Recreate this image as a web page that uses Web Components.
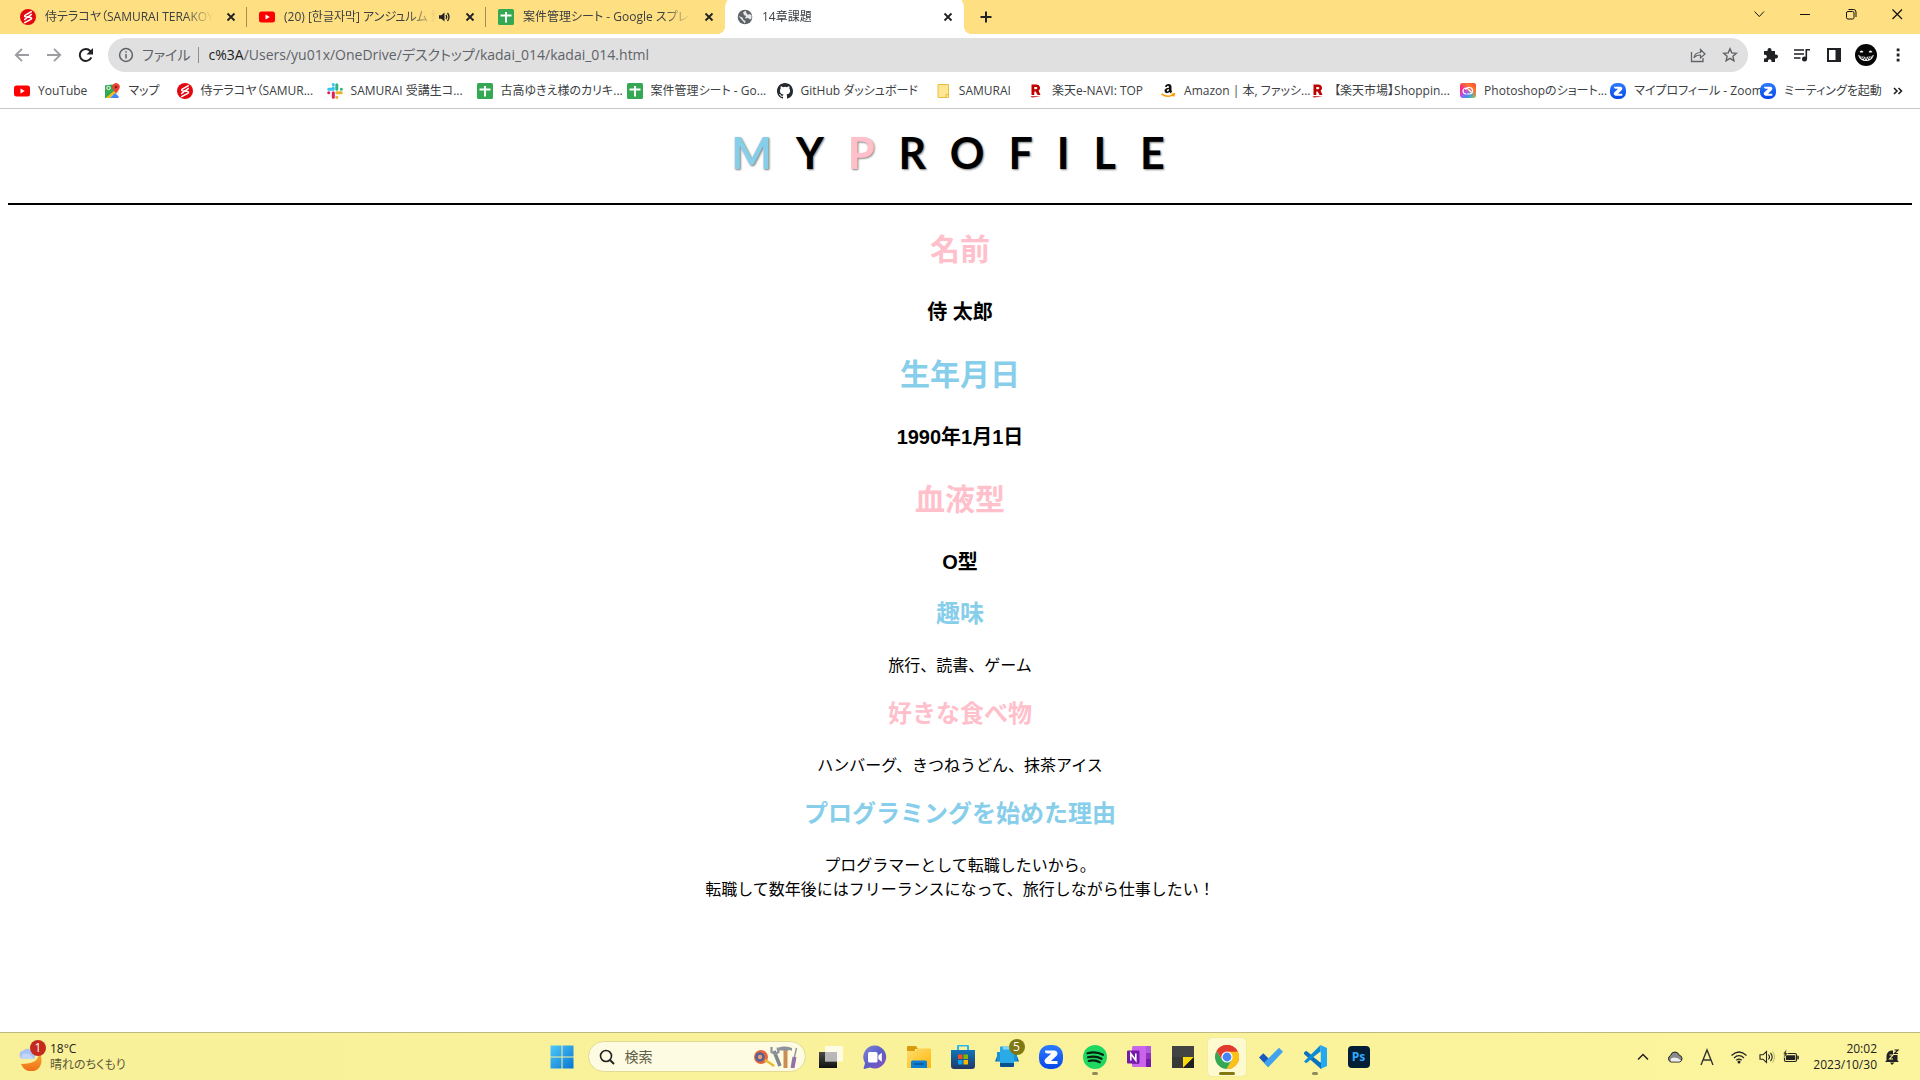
<!DOCTYPE html>
<html lang="ja">
<head>
<meta charset="utf-8">
<title>14章課題</title>
<style>
  html, body { margin: 0; height: 100%; }
  body { background: #fff; overflow: hidden; font-family: "Open Sans", "Noto Sans CJK JP", "Noto Sans CJK KR", sans-serif; }
</style>
</head>
<body>
<desktop-screen></desktop-screen>
<script>
const sheet = '<rect width="16" height="16" rx="1.5" fill="#34a853"/><path d="M2.5 6.5h11M8 3v10.5" stroke="#fff" stroke-width="2" fill="none"/>';
const zoomIcon = '<linearGradient id="z" x1="0" y1="0" x2="0" y2="1"><stop stop-color="#2d7cff"/><stop offset="1" stop-color="#0546e8"/></linearGradient><rect width="24" height="24" rx="10" fill="url(#z)"/><path d="M6 5.500h9.500a3 3 0 0 1 2.300 4.900L12 16h6.500v3H8.500a3 3 0 0 1-2.300-4.900L12.300 8.500H8.500A2.500 2.500 0 0 1 6 6z" fill="#fff"/>';
const samurai = '<circle cx="8" cy="8" r="8" fill="#e3070f"/><path d="M11.800 2.300 5.300 6.200q-1.500 1 .2 1.600l5 .8q2 .5.3 1.700l-6.600 3.600M4.300 10.800l4-3.300M11.800 5.200l-4 3" stroke="#fff" stroke-width="1.500" fill="none"/>';
const youtube = '<rect y="2.500" width="16" height="11" rx="2.500" fill="#f00"/><path d="M6.500 5.500v5L10.800 8z" fill="#fff"/>';
const rakuten = '<path d="M3.500 1.500h5.300a3.400 3.400 0 0 1 1.800 6.200L12.500 12H9.600L7.600 8.400H6.300V12H3.500zM6.300 3.900V6.200H8.200a1.150 1.150 0 0 0 0-2.300z" fill="#bf0000"/><path d="M2.500 13.200h10.500L4 14.500z" fill="#bf0000"/>';
const ICONS = {
  samurai: [16, samurai], youtube: [16, youtube], sheet: [16, sheet], rakuten: [16, rakuten], zoom: [24, zoomIcon],
  globe: [16, '<circle cx="8" cy="8" r="7.300" fill="#5f6368"/><path d="M8.500 1.500 6 3.500 7 6l2 1-1 2.500L11 9l2 1.500 1.500-1L14.500 6 12 5l-1 1-1.500-2zM1.500 7l4 1.500 1 2.500 2 1-.5 2.500" fill="#ffffff" opacity=".85"/>'],
  close: [16, '<path d="m4.500 4.500 7 7m0-7-7 7" stroke="#202124" stroke-width="1.800" fill="none"/>'],
  sound: [16, '<path d="M3 6.300h2.300L8.500 3.500v9L5.300 9.700H3z" fill="#202124"/><path d="M10 6q1.500 2 0 4M11.500 4q3 4 0 8" stroke="#202124" stroke-width="1.300" fill="none"/>'],
  plus: [16, '<path d="M8 2.500v11M2.500 8h11" stroke="#202124" stroke-width="2"/>'],
  chev: [16, '<path d="m3.500 5.500 4.800 5 4.700-5" stroke="#111" fill="none"/>'],
  min: [16, '<path d="M3 8.500h10" stroke="#111"/>'],
  restore: [16, '<rect x="3.500" y="5.500" width="7.500" height="7.500" rx="1.500" stroke="#111" fill="none"/><path d="M5.500 3.500H10.500a2.500 2.500 0 0 1 2.500 2.500v5" stroke="#111" fill="none"/>'],
  wclose: [16, '<path d="m3.500 3.500 9.500 9.500m0-9.500L3.500 13" stroke="#111" stroke-width="1.200"/>'],
  back: [16, '<path d="M15 8H2M8 1.800 1.800 8 8 14.200" stroke="#9b9da0" stroke-width="1.900" fill="none"/>'],
  forward: [16, '<path d="M1 8h13M8 1.800 14.200 8 8 14.200" stroke="#9b9da0" stroke-width="1.900" fill="none"/>'],
  reload: [16, '<path d="M13.300 10.300A6 6 0 1 1 12.300 4L13.500 5.500" stroke="#202124" stroke-width="2" fill="none"/><path d="M15 1v6.500H8.500z" fill="#202124"/>'],
  info: [16, '<circle cx="8" cy="8" r="6.400" stroke="#5f6368" stroke-width="1.500" fill="none"/><path d="M8 7v4.500M8 4.300v1.500" stroke="#5f6368" stroke-width="1.500"/>'],
  share: [16, '<path d="M1.500 5v9.500h11.500V11" stroke="#5f6368" stroke-width="1.300" fill="none"/><path d="M4 11q.5-5.500 6.500-5.500V2.500L15 7l-4.500 4V8Q6 8 4 11z" stroke="#5f6368" stroke-width="1.200" fill="none"/>'],
  star: [16, '<path d="m8 1.800 1.800 4.100 4.500.4-3.400 3 1 4.400L8 11.400l-3.900 2.300 1-4.400-3.400-3 4.500-.4z" stroke="#5f6368" stroke-width="1.400" fill="none"/>'],
  puzzle: [16, '<path d="M2 4h3.500V3a2 2 0 0 1 4 0v1H13v3.500h1a2 2 0 0 1 0 4h-1V15H9.500v-1a1.800 1.800 0 0 0-3.600 0v1H2v-3.500h1A1.900 1.900 0 0 0 3 7.700H2z" fill="#202124"/>'],
  media: [16, '<path d="M0 3h10M0 7h10M0 11h6.500" stroke="#202124" stroke-width="1.700"/><circle cx="10.500" cy="12" r="2.500" fill="#202124"/><path d="M12.300 12V2.800H16" stroke="#202124" stroke-width="1.600" fill="none"/>'],
  panel: [16, '<path d="M1 1h14v14H1z" fill="#202124"/><path d="M3 3h6.500v10H3z" fill="#fff"/>'],
  avatar: [22, '<circle cx="11" cy="11" r="11" fill="#050505"/><path d="M4.500 8q2-3 4 0-2 1-4 0M13.500 8q2-3 4 0-2 1-4 0M3 11q8 4 16 0-2 6-8 6t-8-6z" fill="#fff"/><path d="m4.500 13 2-.5.5 2.500 1.500-2 1 3 1.500-3 1.500 3 1-3 1.500 2 .7-2.500 2 .5" stroke="#050505" stroke-width=".7" fill="none"/>'],
  dots: [16, '<path d="M6.700 1.500h2.800v2.800H6.700zM6.700 6.600h2.800v2.800H6.700zM6.700 11.700h2.800v2.800H6.700z" fill="#202124"/>'],
  more: [16, '<path d="m4 5 3 3-3 3M8.500 5l3 3-3 3" stroke="#202124" stroke-width="1.600" fill="none"/>'],
  maps: [16, '<rect x="1" y="1.500" width="13.500" height="13.500" rx="1.500" fill="#e6e6e6"/><path d="M1 2.500 8.500 1.500 13 6 2 15H1z" fill="#34a853"/><path d="m2 15 11-9.500 1.500 1.500-9 8z" fill="#fbbc04"/><path d="m6 15 5-5 3.500 3.500V15z" fill="#4285f4"/><path d="M12 0a3.800 3.800 0 0 1 3.500 5.300Q15 7 12 10.500 9 7 8.500 5.300A3.800 3.800 0 0 1 12 0z" fill="#ea4335"/><circle cx="12" cy="4" r="1.300" fill="#8b1a10"/><circle cx="4.500" cy="5" r="1.700" stroke="#fff" fill="none"/>'],
  slack: [16, '<g stroke-width="3" stroke-linecap="round"><path d="M1.700 6.300H5M6.300 1.600v.1M6.300 5v1.300" stroke="#36c5f0"/><path d="M9.800 1.700v4.500M14.300 6.300h.1" stroke="#2eb67d"/><path d="M9.800 9.800h4.500M9.800 14.300v.1" stroke="#ecb22e"/><path d="M6.300 9.800v4.500M1.700 9.800h.1" stroke="#e01e5a"/></g>'],
  github: [16, '<path fill="#24292f" d="M8 0C3.580 0 0 3.580 0 8c0 3.540 2.290 6.530 5.470 7.590.4.070.55-.17.55-.38 0-.19-.01-.82-.01-1.490-2.010.37-2.530-.49-2.690-.94-.09-.23-.48-.94-.82-1.130-.28-.15-.68-.52-.01-.53.63-.01 1.080.58 1.230.82.72 1.210 1.870.87 2.330.66.070-.52.28-.87.51-1.070-1.780-.2-3.640-.89-3.640-3.950 0-.87.31-1.590.82-2.150-.08-.2-.36-1.020.08-2.120 0 0 .67-.21 2.200.82a7.600 7.600 0 0 1 4 0c1.530-1.040 2.200-.82 2.200-.82.44 1.100.16 1.920.08 2.120.51.56.82 1.270.82 2.150 0 3.070-1.870 3.750-3.650 3.950.29.25.54.73.54 1.480 0 1.070-.01 1.930-.01 2.200 0 .21.15.46.55.38A8 8 0 0 0 16 8c0-4.420-3.580-8-8-8z"/>'],
  folder: [16, '<path d="M3 1.500h10.500v13H3z" fill="#ffe693" stroke="#e8bf42"/><path d="M11 14.500v-3h2.500" stroke="#e8bf42" fill="none"/>'],
  amazon: [16, '<path d="M5 3.800Q5.500 1 8.500 1q3 0 3 3v3q0 1 .7 1.800L10.500 10.300q-.8-.6-1.100-1.200-1 1.100-2.500 1.100Q4.500 10 4.500 7.700 4.500 5 9 4.700 9.200 2.800 8 2.800 7 2.900 6.900 4zM9 6.100Q6.800 6.200 6.800 7.500q0 1 .9 1Q9 8.400 9 6.100" fill="#111"/><path d="M1.500 10.800q6 4.500 12 .8M11.500 11.300l2.800-.3-.8 2.500" stroke="#f90" stroke-width="1.600" fill="none"/>'],
  adobe: [16, '<linearGradient id="r" x1="0" y1="0" x2="1" y2="1"><stop stop-color="#f33"/><stop offset=".3" stop-color="#f0309c"/><stop offset=".5" stop-color="#a55cf0"/><stop offset=".7" stop-color="#2f9bf0"/><stop offset="1" stop-color="#8fe040"/></linearGradient><linearGradient id="o" x1="1" y1="0" x2="0" y2="1"><stop stop-color="#ff4020"/><stop offset=".3" stop-color="#ff7a30"/><stop offset=".6" stop-color="#ff7a30" stop-opacity="0"/></linearGradient><rect width="16" height="15" rx="3" fill="url(#r)"/><rect width="16" height="15" rx="3" fill="url(#o)"/><path d="M6 11a3 3 0 1 1 0-6q1.500 0 3 2l2 2M5.500 6.800Q7 3.800 9.500 4.500a3.300 3.300 0 0 1 .5 6.500H6.500" stroke="#fff" stroke-width="1.200" fill="none"/>'],
  weather: [28, '<linearGradient id="m" x1="0" y1="0" x2="0" y2="1"><stop stop-color="#f9b53c"/><stop offset="1" stop-color="#ee6e14"/></linearGradient><path d="M20 7q4 14-17 14 3 7 10 7.500Q22 28 23.500 19 23.500 10 20 7z" fill="url(#m)"/><path d="M5 16a4.300 4.300 0 0 1 .5-8.500A5 5 0 0 1 14 9q5 1.500 2 7z" fill="#a9c4f4"/><path d="M5 16a3 3 0 0 1 0-5q6-2 11 5z" fill="#c4d5f8"/>'],
  windows: [24, '<linearGradient id="w" x1="0" y1="0" x2="1" y2="1"><stop stop-color="#4fc9f8"/><stop offset="1" stop-color="#0676d2"/></linearGradient><path d="M.5.500h11v11H.5zM12.500.500h11v11h-11zM.5 12.500h11v11H.5zM12.500 12.500h11v11h-11z" fill="url(#w)"/>'],
  search: [16, '<circle cx="7" cy="7" r="5.500" stroke="#222" stroke-width="1.600" fill="none"/><path d="m11 11 4 4" stroke="#222" stroke-width="2"/>'],
  taskview: [24, '<linearGradient id="k" x1="0" y1="0" x2="0" y2="1"><stop stop-color="#4a4a4a"/><stop offset="1" stop-color="#111"/></linearGradient><path d="M0 7h18v16H0z" fill="url(#k)"/><path d="M6 1h18v15.500H6z" fill="#fff" opacity=".75"/><path d="M6 7h12v9.500H6z" fill="#aaa" opacity=".6"/>'],
  chat: [24, '<linearGradient id="c" x1="0" y1="0" x2="1" y2="1"><stop stop-color="#8187dc"/><stop offset=".5" stop-color="#5b5fc7"/><stop offset="1" stop-color="#8b4fc0"/></linearGradient><path d="M12 .5A11.500 11.500 0 1 1 7 22.500L1.200 24q-.8 0-.5-1L2 18A11.500 11.500 0 0 1 12 .5z" fill="url(#c)"/><rect x="5" y="7" width="9.500" height="10.500" rx="1.500" fill="#fff"/><path d="m15.300 10.500 3.500-2.700v9l-3.500-2.800z" fill="#fff"/>'],
  files: [24, '<linearGradient id="f" x1="0" y1="0" x2="1" y2="1"><stop stop-color="#ffdd70"/><stop offset="1" stop-color="#fdb80c"/></linearGradient><path d="M0 2q0-1 1-1h8l2 3h-3v3H0z" fill="#d99a0b"/><path d="M0 6h8l3-2.500h12q1 0 1 1V23H0z" fill="url(#f)"/><path d="M4 23v-6q0-1.500 1.500-1.500h13q1.500 0 1.500 1.500v6z" fill="#0f7fd0"/><path d="M7 19h10" stroke="#08539a" stroke-width="1.500"/>'],
  store: [24, '<linearGradient id="s" x1="0" y1="0" x2="0" y2="1"><stop stop-color="#1174ba"/><stop offset="1" stop-color="#223764"/></linearGradient><path d="M7 6V1.500q0-1 1-1h8q1 0 1 1V6" stroke="#27b8ef" stroke-width="2" fill="none"/><path d="M0 5h24v16q0 3-3 3H3q-3 0-3-3z" fill="url(#s)"/><path d="M7 9.500h4.500V14H7z" fill="#f25022"/><path d="M12.500 9.500H17V14h-4.500z" fill="#7fba00"/><path d="M7 15h4.500v4.500H7z" fill="#00a4ef"/><path d="M12.500 15H17v4.500h-4.500z" fill="#ffb900"/>'],
  phone: [24, '<path d="M0 16.500 3.500 7h17l3.500 9.500z" fill="#086fba"/><path d="M2 7h5v9H2zM17 7h5v9h-5z" fill="#1493dc"/><path d="M5 1.500h14v17H5z" fill="#2aabe8"/><path d="M5 18h14v3q0 1-1 1H6q-1 0-1-1z" fill="#09508f"/><path d="M8 1.500h8v3H8z" fill="#7ed7fa"/>'],
  spotify: [24, '<circle cx="12" cy="12" r="12" fill="#1ed760"/><path d="M4.500 8.300q8.500-2.300 15.500 1.500M5 12.300q7.500-2 13.500 1.500M5.800 16q6-1.500 11 1.200" stroke="#071f10" stroke-width="2.200" stroke-linecap="round" fill="none"/>'],
  onenote: [24, '<rect x="5" y="1" width="19" height="21" rx="1.500" fill="#ca64ea"/><path d="M19 1h5v7h-5z" fill="#b15ae0"/><path d="M19 8h5v6h-5z" fill="#9332bf"/><path d="M19 14h5v8h-5z" fill="#7719aa"/><path d="M5 6h7v13H5z" fill="#8c38ad"/><rect y="5.500" width="12.500" height="13" rx="1" fill="#7719aa"/><path d="M3.800 15.500V8.700l5 6.600V8.500" stroke="#fff" stroke-width="1.600" fill="none"/>'],
  notes: [24, '<path d="M1 1h22v11L12 23H1z" fill="#434343"/><path d="M1 12h22v11H1z" fill="#383838"/><path d="M12 12h11L12 23z" fill="#ffda0a"/><path d="M23 12v11H12z" fill="#1f1f1f"/>'],
  chrome: [24, '<path d="M12 12 1.600 6A12 12 0 0 1 22.400 6z" fill="#ea4335"/><path d="M12 12V0A12 12 0 0 1 12 24L17.200 15 22.400 6z" fill="#ea4335"/><path d="M12 6.500h10.700A12 12 0 0 1 11.500 24l5.500-9z" fill="#fbc116"/><path d="M1.600 6A12 12 0 0 0 11.500 24l5.300-9.200-9.500 0z" fill="#34a853"/><path d="M1.600 6A12 12 0 0 1 22.600 6.500H12L7.300 14.800z" fill="#e33b2e"/><circle cx="12" cy="12" r="5.600" fill="#fff"/><circle cx="12" cy="12" r="4.400" fill="#4285f4"/>'],
  todo: [24, '<path d="m0 12.500 4.300-4.300 7.500 7.500-2.500 6.500z" fill="#195bbd"/><path d="m20 2.800 4 4L9.300 22.200 5 17.800z" fill="#3fa3f0"/>'],
  code: [24, '<path d="M17.500 0 24 3v18l-6.500 3z" fill="#23a8f2"/><path d="m1 7.500 2.200-1.800 14.800 12V24L1 9z" fill="#0b72bd"/><path d="M1 16.500 17.500 0v7L3.200 18.300z" fill="#0f8bd8"/><path d="M17.500 6.500v11L10.500 12z" fill="#fbf39f"/>'],
  up: [16, '<path d="m3 10.500 5-5 5 5" stroke="#222" stroke-width="1.500" fill="none"/>'],
  cloud: [16, '<path d="M4 13a3.500 3.500 0 0 1-.5-6.500Q4.500 3 8 3q3 0 4.200 3.200a3.500 3.500 0 0 1 .3 6.800z" fill="#8a8a8a" stroke="#222" stroke-width="1"/><path d="M4 12.500a3 3 0 0 1 0-3q5-3 10 2-.5 1-2 1z" fill="#eee"/>'],
  ime: [20, '<path d="M4 18 10 3l6 15M6 13h8" stroke="#333" stroke-width="1.400" fill="none"/>'],
  wifi: [16, '<path d="M.5 6.500q7.500-7 15 0M3 9q5-4.600 10 0M5.300 11.300q2.700-2.300 5.400 0" stroke="#222" stroke-width="1.200" fill="none"/><circle cx="8" cy="13" r="1.500" fill="#222"/>'],
  volume: [16, '<path d="M1 5.800h3L7.500 2.500v11L4 10.200H1z" stroke="#222" stroke-width="1.100" fill="none"/><path d="M9.500 5.500q2 2.500 0 5M11.500 3.800q3.300 4.200 0 8.400" stroke="#222" stroke-width="1.100" fill="none"/><path d="M13.500 2.300q4 5.700 0 11.400" stroke="#bbb67a" stroke-width="1" fill="none"/>'],
  battery: [16, '<rect x="1.500" y="4.500" width="12" height="8" rx="1.500" stroke="#222" stroke-width="1.200" fill="none"/><path d="M3 6.200h9.200v4.800H3zM14.300 6.800h1.500v3.500h-1.500z" fill="#222"/><path d="M3.500 0 0 5h2l-1 4 4-5H3z" fill="#222" stroke="#faf19b" stroke-width=".5"/>'],
  bell: [16, '<path d="M2.500 11.500V7A5.500 5.500 0 0 1 9 1.500V6h4.500v5.500L15 13H1z" fill="#222"/><path d="M6 13.500h4.500L8 16z" fill="#222"/><path d="M10.500 1H14l-3.500 3.500H14" stroke="#222" stroke-width="1.200" fill="none"/><path d="M5.500 6H9L5.500 10H9" stroke="#faf19b" stroke-width="1.100" fill="none"/>'],
  tools: [44, '<g transform="translate(0 11)"><circle cx="7" cy="11" r="7" fill="#e5673c"/><circle cx="6" cy="11" r="4.800" fill="#5a5f94"/><circle cx="6" cy="11" r="2.200" fill="#e9a081"/><path d="M11 14q5 3 9 6" stroke="#e8b931" stroke-width="2.500" fill="none"/><path d="m20 5 6 15" stroke="#80868e" stroke-width="3.500"/><path d="M17.500 1v5l4 2 3-2-1-4.500" stroke="#8e949c" stroke-width="2.200" fill="none"/><path d="M31.500 3v19" stroke="#c98d55" stroke-width="4"/><path d="M25 1.500q5-2 13 .5v3q-2-1.500-4-.5h-9z" fill="#8d939b"/><path d="m42.500 2-2.500 11" stroke="#9299a1" stroke-width="1.500"/><path d="m40.500 11-2 11" stroke="#9270a9" stroke-width="4"/></g>']
};

const define = (name, markup, setup) => {
  const template = document.createElement('template');
  template.innerHTML = markup;
  customElements.define(name, class extends HTMLElement {
    constructor() {
      super();
      this.attachShadow({ mode: 'open' }).append(template.content.cloneNode(true));
    }
    connectedCallback() { if (setup) setup.call(this, this.shadowRoot); }
  });
};

define('ui-icon', `<style>:host{display:inline-flex;flex:none}svg{display:block}</style>`, function (root) {
  if (root.querySelector('svg')) return;
  const [box, art] = ICONS[this.getAttribute('name')];
  const size = this.getAttribute('size') || 16;
  root.innerHTML += `<svg aria-hidden="true" width="${size}" height="${size}" viewBox="0 0 ${box} ${box}">${art}</svg>`;
});

define('icon-button', `<style>
  :host{display:flex;flex:none;width:32px;height:100%}
  button{all:unset;display:flex;align-items:center;justify-content:center;width:100%;height:100%}
</style><button type="button"><slot></slot></button>`, function (root) {
  root.querySelector('button').setAttribute('aria-label', this.getAttribute('label'));
});

define('browser-tab', `<style>
  :host{display:flex;position:relative;flex:0 1 239px;min-width:0;height:34px;box-sizing:border-box;align-items:center;padding:6px 6px 0 12px;margin-top:-6px;color:#3c4043;font-size:12px}
  :host{height:40px}
  .name{flex:1;min-width:0;margin-left:9px;overflow:hidden;white-space:nowrap;line-height:20px;font-feature-settings:"palt";mask-image:linear-gradient(90deg,#000 calc(100% - 28px),transparent)}
  icon-button{width:20px;height:20px;margin-left:8px}
  .line{width:1px;height:20px;background:#a08d55;position:absolute;right:0;top:13px}
  :host([last]) .line,:host([active]) .line{display:none}
  :host([active]){background:#fff;border-radius:14px 14px 0 0}
  :host([active])::before,:host([active])::after{content:"";position:absolute;bottom:0;width:8px;height:8px}
  :host([active])::before{left:-8px;background:radial-gradient(circle at 0 0,transparent 8px,#fff 8px)}
  :host([active])::after{right:-8px;background:radial-gradient(circle at 100% 0,transparent 8px,#fff 8px)}
</style><slot name="icon"></slot><span class="name"><slot></slot></span><slot name="status"></slot>
<icon-button label="タブを閉じる"><ui-icon name="close"></ui-icon></icon-button><span class="line"></span>`);

define('tab-strip', `<style>
  :host{display:flex;height:34px;background:#fedf82;padding-left:8px;overflow:hidden}
  .tabs{display:flex;flex:0 1 956px;min-width:0}
  .new{width:44px}
  .controls{display:flex;margin-left:auto;height:28px}
  .controls icon-button{width:46px}
</style>
<div class="tabs">
  <browser-tab><ui-icon slot="icon" name="samurai"></ui-icon>侍テラコヤ（SAMURAI TERAKOYA）</browser-tab>
  <browser-tab><ui-icon slot="icon" name="youtube"></ui-icon>(20) [한글자막] アンジュルム 愛されルート<ui-icon slot="status" name="sound"></ui-icon></browser-tab>
  <browser-tab last><ui-icon slot="icon" name="sheet"></ui-icon>案件管理シート - Google スプレッドシート</browser-tab>
  <browser-tab active><ui-icon slot="icon" name="globe"></ui-icon>14章課題</browser-tab>
</div>
<icon-button class="new" label="新しいタブ"><ui-icon name="plus"></ui-icon></icon-button>
<div class="controls">
  <icon-button label="タブを検索"><ui-icon name="chev"></ui-icon></icon-button>
  <icon-button label="最小化"><ui-icon name="min"></ui-icon></icon-button>
  <icon-button label="元に戻す"><ui-icon name="restore"></ui-icon></icon-button>
  <icon-button label="閉じる"><ui-icon name="wclose"></ui-icon></icon-button>
</div>`);

define('address-bar', `<style>
  :host{display:flex;flex:1;min-width:0;height:34px;background:#e0e0e0;border-radius:17px;align-items:center;padding:0 2px 0 10px;box-sizing:border-box;color:#5f6368;font-size:14px;line-height:20px;font-feature-settings:"palt"}
  .scheme{margin-left:8px}
  .line{width:1px;height:16px;background:#8c8e91;margin:0 9px 0 8px}
  label{color:#202124}
  input{all:unset;flex:1;min-width:0;color:#5f6368;font:inherit;line-height:20px}
</style>
<ui-icon name="info"></ui-icon><span class="scheme">ファイル</span><span class="line"></span>
<label for="url">c%3A</label><input id="url" type="text" value="/Users/yu01x/OneDrive/デスクトップ/kadai_014/kadai_014.html">
<icon-button label="共有"><ui-icon name="share"></ui-icon></icon-button>
<icon-button label="ブックマークに追加"><ui-icon name="star"></ui-icon></icon-button>`);

define('tool-bar', `<style>
  :host{display:flex;height:42px;align-items:center;background:#fff;padding:0 6px}
  address-bar{margin:0 6px}
</style>
<icon-button label="戻る"><ui-icon name="back"></ui-icon></icon-button>
<icon-button label="進む"><ui-icon name="forward"></ui-icon></icon-button>
<icon-button label="再読み込み"><ui-icon name="reload"></ui-icon></icon-button>
<address-bar></address-bar>
<icon-button label="拡張機能"><ui-icon name="puzzle"></ui-icon></icon-button>
<icon-button label="メディア"><ui-icon name="media"></ui-icon></icon-button>
<icon-button label="サイドパネル"><ui-icon name="panel"></ui-icon></icon-button>
<icon-button label="プロフィール"><ui-icon name="avatar" size="22"></ui-icon></icon-button>
<icon-button label="メニュー"><ui-icon name="dots"></ui-icon></icon-button>`);

define('book-mark', `<style>
  :host{display:block;flex:none;box-sizing:border-box;padding-right:17px}
  :host([wide]){width:150px;padding-right:0}
  a{display:flex;align-items:center;gap:8px;color:#3c4043;text-decoration:none;font-size:12px;line-height:20px;white-space:nowrap;font-feature-settings:"palt"}
</style><a href="#"><slot name="icon"></slot><span><slot></slot></span></a>`);

define('bookmark-bar', `<style>
  :host{display:flex;height:33px;box-sizing:border-box;align-items:center;background:#fff;border-bottom:1px solid #c9c9c9;padding:0 6px 2px 14px}
  .list{display:flex;flex:1;min-width:0;overflow:hidden}
</style><div class="list"></div><icon-button label="その他のブックマーク"><ui-icon name="more"></ui-icon></icon-button>`, function (root) {
  root.querySelector('.list').innerHTML = [
    ['youtube', 'YouTube'], ['maps', 'マップ'], ['samurai', '侍テラコヤ（SAMUR...', 1], ['slack', 'SAMURAI 受講生コ...', 1],
    ['sheet', '古高ゆきえ様のカリキ...', 1], ['sheet', '案件管理シート - Go...', 1], ['github', 'GitHub ダッシュボード'],
    ['folder', 'SAMURAI'], ['rakuten', '楽天e-NAVI: TOP'], ['amazon', 'Amazon | 本, ファッシ...', 1],
    ['rakuten', '【楽天市場】Shoppin...', 1], ['adobe', 'Photoshopのショート...', 1],
    ['zoom', 'マイプロフィール - Zoom', 1], ['zoom', 'ミーティングを起動 - Z...', 1]
  ].map(([i, t, w]) => `<book-mark${w ? ' wide' : ''}><ui-icon slot="icon" name="${i}"></ui-icon>${t}</book-mark>`).join('');
});

define('profile-entry', `<style>
  :host{display:block}
  h2,h3,p{margin:0}
  h2{font-size:30px;line-height:45px;margin-bottom:25px}
  :host([minor]) h2{font-size:24px;line-height:36px;margin-bottom:22px}
  h2{color:pink}
  :host([blue]) h2{color:skyblue}
  p{font-size:20px;line-height:30px;font-weight:700;margin-bottom:25px}
  :host([minor]) p{font-size:16px;line-height:24px;font-weight:400;margin-bottom:18px}
</style><h2><slot name="title"></slot></h2><p><slot></slot></p>`);

define('profile-page', `<style>
  :host{display:block;flex:1;min-height:0;overflow:hidden;background:#fff;color:#000;text-align:center;padding:0 8px;font-family:"Liberation Sans","Noto Sans CJK JP",sans-serif}
  header{border-bottom:2px solid #000;padding:14px 0 20px;margin-bottom:22px}
  h1{margin:0;font-family:Lato,sans-serif;font-weight:700;font-size:43px;line-height:60px;letter-spacing:24px;text-shadow:1px 1px 2px #808080}
  .m{color:skyblue}.p{color:pink}
  .minor{margin-top:-6px}
</style>
<header><h1><span class="m">M</span>Y<span class="p">P</span>ROFILE</h1></header>
<main>
  <profile-entry><span slot="title">名前</span>侍 太郎</profile-entry>
  <profile-entry blue><span slot="title">生年月日</span>1990年1月1日</profile-entry>
  <profile-entry><span slot="title">血液型</span>O型</profile-entry>
  <div class="minor">
    <profile-entry minor blue><span slot="title">趣味</span>旅行、読書、ゲーム</profile-entry>
    <profile-entry minor><span slot="title">好きな食べ物</span>ハンバーグ、きつねうどん、抹茶アイス</profile-entry>
    <profile-entry minor blue><span slot="title">プログラミングを始めた理由</span>プログラマーとして転職したいから。<br>転職して数年後にはフリーランスになって、旅行しながら仕事したい！</profile-entry>
  </div>
</main>`);

define('task-icon', `<style>
  :host{display:flex;flex:none;width:44px;height:47px;position:relative;align-items:center;justify-content:center}
  button{all:unset;display:flex;align-items:center;justify-content:center;width:38px;height:38px;border-radius:4px}
  :host([current]) button{background:#fefad0;box-shadow:0 0 1px #c8c080}
  i{display:none;position:absolute;bottom:5px;height:3px;border-radius:2px;width:6px;background:#8f8a58}
  :host([running]) i,:host([current]) i{display:block}
  :host([current]) i{width:16px;background:#807810}
</style><button type="button"><slot></slot></button><i></i>`, function (root) {
  root.querySelector('button').setAttribute('aria-label', this.getAttribute('label'));
});

define('task-bar', `<style>
  :host{display:grid;grid-template-columns:1fr auto 1fr;flex:none;height:48px;box-sizing:border-box;border-top:1px solid #bdb984;background:linear-gradient(90deg,#f9f09a,#faf19b 40%,#fcf59d);align-items:center;color:#222;font-size:12px;line-height:16px}
  .weather{all:unset;display:flex;align-items:center;gap:4px;padding-left:18px;position:relative;font-feature-settings:"palt"}
  .weather span{display:block}.weather .sky{color:#5b5838}
  .badge{position:absolute;width:16px;height:16px;border-radius:8px;background:#c42b1c;color:#fff;text-align:center;left:30px;top:-1px}
  .apps{display:flex;align-items:center}
  .find{display:flex;align-items:center;box-sizing:border-box;width:218px;height:31px;margin:0 3px 0 4px;border-radius:16px;background:#fefbe3;border:1px solid #e3db94;padding:0 7px 0 10px}
  input{all:unset;flex:1;min-width:0;margin-left:10px;font-size:14px;line-height:20px}
  input::placeholder{color:#5f5d48;opacity:1}
  .count{position:absolute;left:24px;top:6px;width:16px;height:16px;border-radius:8px;background:#807810;color:#fff;text-align:center}
  .ps{display:flex;width:22px;height:22px;border-radius:4px;background:#001e36;color:#31a8ff;font-weight:700;font-size:12px;align-items:center;justify-content:center}
  .tray{display:flex;justify-content:flex-end;align-items:center;padding-right:20px}
  .tray icon-button{height:32px}
  .tray .near{width:24px}
  .clock{all:unset;text-align:right;margin:0 7px 0 0;min-width:74px}
  .clock span{display:block}
  .bell{width:16px}
</style>
<button class="weather" type="button"><ui-icon name="weather" size="28"></ui-icon><span class="badge">1</span><span><span>18°C</span><span class="sky">晴れのちくもり</span></span></button>
<div class="apps">
  <task-icon label="スタート"><ui-icon name="windows" size="24"></ui-icon></task-icon>
  <div class="find"><ui-icon name="search"></ui-icon><input type="search" aria-label="検索" placeholder="検索"><ui-icon name="tools" size="44"></ui-icon></div>
  <task-icon label="タスク ビュー"><ui-icon name="taskview" size="24"></ui-icon></task-icon>
  <task-icon label="チャット"><ui-icon name="chat" size="24"></ui-icon></task-icon>
  <task-icon label="エクスプローラー"><ui-icon name="files" size="24"></ui-icon></task-icon>
  <task-icon label="ストア"><ui-icon name="store" size="24"></ui-icon></task-icon>
  <task-icon label="スマートフォン連携"><ui-icon name="phone" size="24"></ui-icon><span class="count">5</span></task-icon>
  <task-icon label="Zoom"><ui-icon name="zoom" size="24"></ui-icon></task-icon>
  <task-icon label="Spotify" running><ui-icon name="spotify" size="24"></ui-icon></task-icon>
  <task-icon label="OneNote"><ui-icon name="onenote" size="24"></ui-icon></task-icon>
  <task-icon label="付箋"><ui-icon name="notes" size="24"></ui-icon></task-icon>
  <task-icon label="Chrome" current><ui-icon name="chrome" size="24"></ui-icon></task-icon>
  <task-icon label="To Do"><ui-icon name="todo" size="24"></ui-icon></task-icon>
  <task-icon label="Visual Studio Code" running><ui-icon name="code" size="24"></ui-icon></task-icon>
  <task-icon label="Photoshop"><span class="ps">Ps</span></task-icon>
</div>
<div class="tray">
  <icon-button label="隠れているインジケーター"><ui-icon name="up"></ui-icon></icon-button>
  <icon-button label="OneDrive"><ui-icon name="cloud"></ui-icon></icon-button>
  <icon-button label="入力モード"><ui-icon name="ime" size="20"></ui-icon></icon-button>
  <icon-button label="ネットワーク"><ui-icon name="wifi"></ui-icon></icon-button>
  <icon-button class="near" label="音量"><ui-icon name="volume"></ui-icon></icon-button>
  <icon-button class="near" label="バッテリー"><ui-icon name="battery"></ui-icon></icon-button>
  <button class="clock" type="button"><span>20:02</span><span>2023/10/30</span></button>
  <icon-button class="bell" label="通知"><ui-icon name="bell"></ui-icon></icon-button>
</div>`);

define('desktop-screen', `<style>
  :host{display:flex;flex-direction:column;height:100vh}
  tab-strip,tool-bar,bookmark-bar{flex:none}
</style><tab-strip></tab-strip><tool-bar></tool-bar><bookmark-bar></bookmark-bar><profile-page></profile-page><task-bar></task-bar>`);
</script>
</body>
</html>
